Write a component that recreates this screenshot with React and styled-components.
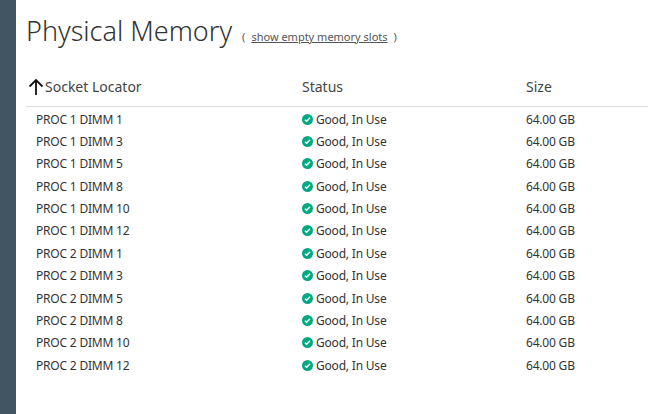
import React from 'react';
import styled, { createGlobalStyle } from 'styled-components';

const Global = createGlobalStyle`
  body { margin: 0; background: #fff; font-family: "Noto Sans", "Liberation Sans", sans-serif; color: #333; }
`;

const Page = styled.div`
  display: flex;
  height: 414px;
  overflow: hidden;
`;

const Side = styled.div`
  width: 16px;
  flex: none;
  background: #425563;
`;

const Main = styled.div`
  flex: 1;
  padding: 12px 0 0 10px;
`;

const TitleRow = styled.div`
  display: flex;
  align-items: baseline;
  gap: 10px;
  height: 40px;
`;

const Title = styled.h1`
  margin: 0;
  font-size: 27px;
  font-weight: 300;
  color: #333;
`;

const Toggle = styled.span`
  font-size: 11px;
  color: #555;
  a { color: #555; text-decoration: underline; margin: 0 6px; }
`;

const Row = styled.div`
  display: grid;
  grid-template-columns: 276px 224px 1fr;
  align-items: center;
  height: ${p => (p.$head ? '55px' : '22.36px')};
  font-size: ${p => (p.$head ? '14px' : '12px')};
  color: ${p => (p.$head ? '#444' : '#333')};
  padding-left: ${p => (p.$head ? '0' : '10px')};
  letter-spacing: ${p => (p.$head ? '0' : '-0.2px')};
  ${p => p.$head && 'border-bottom: 1px solid #ddd; margin-bottom: 1px; box-sizing: border-box; align-items: end; padding-bottom: 10px;'}
`;

const HeadFirst = styled.span`
  display: flex;
  align-items: center;
  gap: 1px;
  margin-left: 2px;
`;

const Cell = styled.span`
  margin-left: ${p => p.$shift || 0};
  display: flex;
  align-items: center;
  gap: 3px;
`;

const Check = () => (
  <svg width="11" height="11" viewBox="0 0 12 12">
    <circle cx="6" cy="6" r="6" fill="#01a982" />
    <path d="M3.2 6.2l1.9 1.8 3.7-3.8" stroke="#fff" strokeWidth="1.6" fill="none" />
  </svg>
);

const rows = [
  'PROC 1 DIMM 1', 'PROC 1 DIMM 3', 'PROC 1 DIMM 5', 'PROC 1 DIMM 8', 'PROC 1 DIMM 10', 'PROC 1 DIMM 12',
  'PROC 2 DIMM 1', 'PROC 2 DIMM 3', 'PROC 2 DIMM 5', 'PROC 2 DIMM 8', 'PROC 2 DIMM 10', 'PROC 2 DIMM 12',
];

export default function App() {
  return (
    <Page>
      <Global />
      <Side />
      <Main>
        <TitleRow>
          <Title>Physical Memory</Title>
          <Toggle>(<a>show empty memory slots</a>)</Toggle>
        </TitleRow>
        <Row $head>
          <HeadFirst>
            <svg width="16" height="18" viewBox="0 0 16 18">
              <path d="M8 17V2M1.5 8.5L8 2l6.5 6.5" stroke="#111" strokeWidth="1.8" fill="none" />
            </svg>
            Socket Locator
          </HeadFirst>
          <Cell>Status</Cell>
          <Cell>Size</Cell>
        </Row>
        {rows.map(r => (
          <Row key={r}>
            <span>{r}</span>
            <Cell $shift="-10px"><Check />Good, In Use</Cell>
            <Cell $shift="-10px">64.00 GB</Cell>
          </Row>
        ))}
      </Main>
    </Page>
  );
}
